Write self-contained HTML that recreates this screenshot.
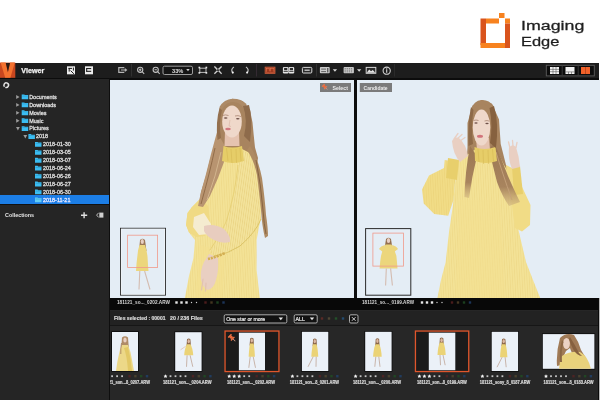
<!DOCTYPE html>
<html><head><meta charset="utf-8">
<style>
*{margin:0;padding:0;box-sizing:border-box}
html,body{width:600px;height:400px;overflow:hidden;background:#fff;font-family:"Liberation Sans",sans-serif}
.a{position:absolute}
svg.a{will-change:transform}
#brand{left:520.7px;top:17.8px;color:#1f1f1f;font-size:13.7px;line-height:16.1px;-webkit-text-stroke:0.28px #1f1f1f;will-change:transform}
#brand span{display:block;transform-origin:0 0;white-space:nowrap;transform:scaleX(1.3)}
#toolbar{left:0;top:62.5px;width:599.3px;height:15.5px;background:#1d1d1d}
#tbline{left:0;top:77.5px;width:599.3px;height:2.5px;background:#0c0c0c}
#sidebar{left:0;top:79.3px;width:108.5px;height:320.7px;background:#252525}
#sdiv{left:108.5px;top:78px;width:1.5px;height:322px;background:#0e0e0e}
.panel{top:80px;height:218px;background:#e4edf5}
#p1{left:110px;width:244px}
#pdiv{left:354px;top:79px;width:3px;height:219px;background:#0d0d0d}
#p2{left:357px;width:243px}
#info{left:110px;top:298px;width:489px;height:12px;background:#080808}
#filter{left:110px;top:310px;width:489px;height:90px;background:#262626}
#redge{left:599px;top:298px;width:1px;height:102px;background:#b5b5b5}
</style></head><body>

<!-- brand logo -->
<svg class="a" style="left:475px;top:8px" width="40" height="44" viewBox="0 0 40 44">
  <rect x="5.5" y="10.5" width="5.5" height="26.5" fill="#d9541d"/>
  <rect x="11" y="10.5" width="13" height="5" fill="#f7821f"/>
  <rect x="24" y="5" width="5.5" height="5" fill="#f7821f"/>
  <rect x="30" y="10.5" width="5" height="5" fill="#f7821f"/>
  <rect x="30" y="15.5" width="5" height="24.5" fill="#d9541d"/>
  <rect x="5.5" y="35" width="24.5" height="5" fill="#f7821f"/>
</svg>
<div id="brand" class="a"><span>Imaging</span><span style="transform:scaleX(1.2)">Edge</span></div>

<div id="toolbar" class="a"></div>
<div id="tbline" class="a"></div>
<div id="sidebar" class="a"></div>
<div id="sdiv" class="a"></div>
<div id="p1" class="a panel"></div>
<div id="pdiv" class="a"></div>
<div id="p2" class="a panel"></div>
<div id="info" class="a"></div>
<div id="filter" class="a"></div>
<div id="redge" class="a"></div>

<!--SIDEBAR-->
<div class="a" style="left:0;top:195.4px;width:108.5px;height:8.4px;background:#1c7ee6"></div>
<div class="a" style="left:0;top:203.8px;width:108.5px;height:1.2px;background:#111"></div>
<svg class="a" style="left:0;top:0" width="600" height="400" viewBox="0 0 600 400">
<circle cx="6.2" cy="85.2" r="2.3" stroke="#e4e4e4" stroke-width="1.5" fill="none" stroke-dasharray="6.2 1.0 6.2 1.0" transform="rotate(-60 6.2 85.2)"/>
<path d="M16.2 95.1 L19.5 97.0 L16.2 98.9 Z" fill="#9c9c9c"/>
<path d="M21.7 94.5 H24.299999999999997 L24.799999999999997 95.1 H28.2 V99.3 H21.7 Z" fill="#3bbdf2"/>
<rect x="22.2" y="95.8" width="5.4" height="0.5" fill="#2a93c4"/>
<text x="29.2" y="98.8" font-family="Liberation Sans" font-size="5.45" fill="#dedede" stroke="#dedede" stroke-width="0.3">Documents</text>
<path d="M16.2 103.02 L19.5 104.92 L16.2 106.82000000000001 Z" fill="#9c9c9c"/>
<path d="M21.7 102.42 H24.299999999999997 L24.799999999999997 103.02 H28.2 V107.22 H21.7 Z" fill="#3bbdf2"/>
<rect x="22.2" y="103.72" width="5.4" height="0.5" fill="#2a93c4"/>
<text x="29.2" y="106.72" font-family="Liberation Sans" font-size="5.45" fill="#dedede" stroke="#dedede" stroke-width="0.3">Downloads</text>
<path d="M16.2 110.94 L19.5 112.84 L16.2 114.74000000000001 Z" fill="#9c9c9c"/>
<path d="M21.7 110.34 H24.299999999999997 L24.799999999999997 110.94 H28.2 V115.14 H21.7 Z" fill="#3bbdf2"/>
<rect x="22.2" y="111.64" width="5.4" height="0.5" fill="#2a93c4"/>
<text x="29.2" y="114.64" font-family="Liberation Sans" font-size="5.45" fill="#dedede" stroke="#dedede" stroke-width="0.3">Movies</text>
<path d="M16.2 118.86 L19.5 120.76 L16.2 122.66000000000001 Z" fill="#9c9c9c"/>
<path d="M21.7 118.26 H24.299999999999997 L24.799999999999997 118.86 H28.2 V123.06 H21.7 Z" fill="#3bbdf2"/>
<rect x="22.2" y="119.56" width="5.4" height="0.5" fill="#2a93c4"/>
<text x="29.2" y="122.56" font-family="Liberation Sans" font-size="5.45" fill="#dedede" stroke="#dedede" stroke-width="0.3">Music</text>
<path d="M16.0 127.08000000000001 L19.8 127.08000000000001 L17.9 130.48000000000002 Z" fill="#9c9c9c"/>
<path d="M21.7 126.18 H24.299999999999997 L24.799999999999997 126.78 H28.2 V130.98000000000002 H21.7 Z" fill="#3bbdf2"/>
<rect x="22.2" y="127.48" width="5.4" height="0.5" fill="#2a93c4"/>
<text x="29.2" y="130.48000000000002" font-family="Liberation Sans" font-size="5.45" fill="#dedede" stroke="#dedede" stroke-width="0.3">Pictures</text>
<path d="M23.400000000000002 135.0 L27.200000000000003 135.0 L25.3 138.4 Z" fill="#9c9c9c"/>
<path d="M28.400000000000002 134.1 H31.0 L31.5 134.7 H34.9 V138.9 H28.400000000000002 Z" fill="#3bbdf2"/>
<rect x="28.900000000000002" y="135.4" width="5.4" height="0.5" fill="#2a93c4"/>
<text x="36" y="138.4" font-family="Liberation Sans" font-size="5.45" fill="#dedede" stroke="#dedede" stroke-width="0.3">2018</text>
<path d="M35.0 142.02 H37.6 L38.1 142.62 H41.5 V146.82000000000002 H35.0 Z" fill="#3bbdf2"/>
<rect x="35.5" y="143.32000000000002" width="5.4" height="0.5" fill="#2a93c4"/>
<text x="43" y="146.32000000000002" font-family="Liberation Sans" font-size="5.45" fill="#dedede" stroke="#dedede" stroke-width="0.3">2018-01-30</text>
<path d="M35.0 149.94 H37.6 L38.1 150.54 H41.5 V154.74 H35.0 Z" fill="#3bbdf2"/>
<rect x="35.5" y="151.24" width="5.4" height="0.5" fill="#2a93c4"/>
<text x="43" y="154.24" font-family="Liberation Sans" font-size="5.45" fill="#dedede" stroke="#dedede" stroke-width="0.3">2018-03-05</text>
<path d="M35.0 157.86 H37.6 L38.1 158.46 H41.5 V162.66000000000003 H35.0 Z" fill="#3bbdf2"/>
<rect x="35.5" y="159.16000000000003" width="5.4" height="0.5" fill="#2a93c4"/>
<text x="43" y="162.16000000000003" font-family="Liberation Sans" font-size="5.45" fill="#dedede" stroke="#dedede" stroke-width="0.3">2018-03-07</text>
<path d="M35.0 165.78 H37.6 L38.1 166.38 H41.5 V170.58 H35.0 Z" fill="#3bbdf2"/>
<rect x="35.5" y="167.08" width="5.4" height="0.5" fill="#2a93c4"/>
<text x="43" y="170.08" font-family="Liberation Sans" font-size="5.45" fill="#dedede" stroke="#dedede" stroke-width="0.3">2018-06-24</text>
<path d="M35.0 173.7 H37.6 L38.1 174.29999999999998 H41.5 V178.5 H35.0 Z" fill="#3bbdf2"/>
<rect x="35.5" y="175.0" width="5.4" height="0.5" fill="#2a93c4"/>
<text x="43" y="178.0" font-family="Liberation Sans" font-size="5.45" fill="#dedede" stroke="#dedede" stroke-width="0.3">2018-06-26</text>
<path d="M35.0 181.62 H37.6 L38.1 182.22 H41.5 V186.42000000000002 H35.0 Z" fill="#3bbdf2"/>
<rect x="35.5" y="182.92000000000002" width="5.4" height="0.5" fill="#2a93c4"/>
<text x="43" y="185.92000000000002" font-family="Liberation Sans" font-size="5.45" fill="#dedede" stroke="#dedede" stroke-width="0.3">2018-06-27</text>
<path d="M35.0 189.54 H37.6 L38.1 190.14 H41.5 V194.34 H35.0 Z" fill="#3bbdf2"/>
<rect x="35.5" y="190.84" width="5.4" height="0.5" fill="#2a93c4"/>
<text x="43" y="193.84" font-family="Liberation Sans" font-size="5.45" fill="#dedede" stroke="#dedede" stroke-width="0.3">2018-06-30</text>
<path d="M35.0 197.46 H37.6 L38.1 198.06 H41.5 V202.26000000000002 H35.0 Z" fill="#62cdf5"/>
<rect x="35.5" y="198.76000000000002" width="5.4" height="0.5" fill="#2a93c4"/>
<text x="43" y="201.76000000000002" font-family="Liberation Sans" font-size="5.45" fill="#e8e8ff" stroke="#e8e8ff" stroke-width="0.3">2018-11-21</text>
<text x="5" y="217.4" font-family="Liberation Sans" font-weight="bold" font-size="5.4" fill="#e6e6e6">Collections</text>
<path d="M81 215.2 H87.2 M84.1 212.2 V218.3" stroke="#e0e0e0" stroke-width="1.4"/>
<path d="M99.3 212.6 H103.4 V217.6 H99.3 Z" fill="#d0d0d0"/><path d="M98.6 212.8 L96.6 215.1 L98.6 217.4" stroke="#e0e0e0" stroke-width="0.8" fill="none"/>
</svg>
<!--/SIDEBAR-->
<!-- toolbar icons -->
<svg class="a" style="left:0;top:0" width="600" height="400" viewBox="0 0 600 400">
  <!-- V logo -->
  <rect x="0" y="62.6" width="15.3" height="15.2" fill="#c9471f"/>
  <path d="M0.6 62.6 L5.6 62.6 L7.9 72.5 L10.1 62.6 L14.8 62.6 L10.4 77.8 L5.2 77.8 Z" fill="#f4722f"/>
  <path d="M5.8 63 L10 63 L7.9 72 Z" fill="#2b1a14"/>
  <text x="21.3" y="73" font-family="Liberation Sans" font-weight="bold" font-size="7" fill="#f0f0f0" stroke="#f0f0f0" stroke-width="0.25" textLength="23" lengthAdjust="spacingAndGlyphs">Viewer</text>
  <!-- R icon -->
  <rect x="67" y="66.3" width="8" height="8" fill="#ececec"/>
  <path d="M68.4 68.4 H72 M73.4 67.6 V70.6 M69.2 68.4 V71.6 M70.6 70.6 L73.8 73.8" stroke="#111" stroke-width="0.95" fill="none"/>
  <!-- E icon -->
  <rect x="85" y="66.3" width="8" height="8" fill="#ececec"/>
  <path d="M86.3 68.6 H91.2 M86.3 71.3 H91.2 M86.7 68.2 V71.7" stroke="#111" stroke-width="1" fill="none"/>
  <!-- export -->
  <path d="M124.3 67.6 H118.8 V72.4 H124.3" stroke="#b5b5b5" stroke-width="1.2" fill="none"/>
  <path d="M121 70 H126.3 M124.8 68.6 L126.5 70 L124.8 71.4" stroke="#b5b5b5" stroke-width="1.1" fill="none"/>
  <line x1="131.5" y1="64" x2="131.5" y2="76.5" stroke="#303030" stroke-width="1"/>
  <!-- zoom in/out -->
  <circle cx="140.2" cy="69.8" r="2.6" stroke="#c2c2c2" stroke-width="1.1" fill="none"/>
  <path d="M142.1 71.7 L144.2 73.8 M139 69.8 H141.4 M140.2 68.6 V71" stroke="#c2c2c2" stroke-width="1.1" fill="none"/>
  <circle cx="155.7" cy="69.8" r="2.6" stroke="#c2c2c2" stroke-width="1.1" fill="none"/>
  <path d="M157.6 71.7 L159.7 73.8 M154.5 69.8 H156.9" stroke="#c2c2c2" stroke-width="1.1" fill="none"/>
  <!-- zoom dropdown -->
  <rect x="163" y="66.2" width="29.5" height="8.3" rx="1.5" stroke="#9c9c9c" stroke-width="1" fill="#141414"/>
  <text x="172" y="72.9" font-family="Liberation Sans" font-weight="bold" font-size="5.7" fill="#e0e0e0" textLength="11.3" lengthAdjust="spacingAndGlyphs">33%</text>
  <path d="M186.2 69 H189.7 L188 71.3 Z" fill="#d0d0d0"/>
  <!-- fit -->
  <rect x="199.8" y="68.2" width="6.2" height="4.2" stroke="#bcbcbc" stroke-width="1" fill="none"/>
  <rect x="198.5" y="66.7" width="1.7" height="1.7" fill="#e8e8e8"/><rect x="205.5" y="66.7" width="1.7" height="1.7" fill="#e8e8e8"/>
  <rect x="198.5" y="72" width="1.7" height="1.7" fill="#e8e8e8"/><rect x="205.5" y="72" width="1.7" height="1.7" fill="#e8e8e8"/>
  <!-- actual size -->
  <path d="M214.5 66.6 L217.8 69.3 L216.9 70.2 Z M221.5 66.6 L218.8 69.9 L217.9 69 Z M214.5 73.6 L217.2 70.3 L218.1 71.2 Z M221.5 73.6 L218.2 70.9 L219.1 70 Z" fill="#d0d0d0"/>
  <path d="M214.4 66.5 L217.2 69.3 M221.6 66.5 L218.8 69.3 M214.4 73.7 L217.2 70.9 M221.6 73.7 L218.8 70.9" stroke="#d0d0d0" stroke-width="1.3"/>
  <rect x="217.4" y="69.6" width="1.2" height="1.1" fill="#151515"/>
  <!-- rotate -->
  <path d="M233.9 67 Q230.4 69.4 232.6 72.6" stroke="#bdbdbd" stroke-width="1.2" fill="none"/>
  <circle cx="232.8" cy="72.6" r="1.05" fill="#f2f2f2"/>
  <path d="M246 67 Q249.5 69.4 247.3 72.6" stroke="#bdbdbd" stroke-width="1.2" fill="none"/>
  <circle cx="247.1" cy="72.6" r="1.05" fill="#f2f2f2"/>
  <line x1="256.5" y1="64" x2="256.5" y2="76.5" stroke="#342a32" stroke-width="1"/>
  <!-- compare orange -->
  <rect x="265.1" y="67.1" width="9.9" height="6.3" fill="#a43c20" stroke="#c85e3e" stroke-width="0.8"/>
  <rect x="266.3" y="68.4" width="3.4" height="3.6" fill="none" stroke="#e07552" stroke-width="0.6"/>
  <rect x="270.5" y="68.4" width="3.4" height="3.6" fill="none" stroke="#e07552" stroke-width="0.6"/>
  <path d="M266.5 71.4 H273.7" stroke="#7a1e10" stroke-width="0.5"/>
  <!-- double -->
  <rect x="282.9" y="66.9" width="5.6" height="6.6" rx="1.2" fill="#e6e6e6"/>
  <rect x="288.6" y="66.9" width="5.6" height="6.6" rx="1.2" fill="#e6e6e6"/>
  <rect x="284.1" y="67.9" width="3.2" height="2.3" fill="#2a2a2a"/>
  <rect x="289.8" y="67.9" width="3.2" height="2.3" fill="#2a2a2a"/>
  <path d="M283.6 71.4 H287.8 M289.3 71.4 H293.5" stroke="#1a1a1a" stroke-width="0.8"/>
  <!-- single rect -->
  <rect x="302.4" y="67.4" width="9.4" height="5.6" rx="1" stroke="#d8d8d8" stroke-width="1" fill="#2a2a2a"/>
  <path d="M304.5 70.2 H309.7" stroke="#d8d8d8" stroke-width="1.2"/>
  <line x1="316.5" y1="64" x2="316.5" y2="76.5" stroke="#303030" stroke-width="1"/>
  <!-- icon 4 -->
  <rect x="319.9" y="67.1" width="9.8" height="6.1" rx="0.8" fill="#cbcbcb"/>
  <path d="M321.2 69.1 H326 M321.2 71.6 H326" stroke="#333" stroke-width="0.7"/>
  <path d="M327.8 68 V72.4" stroke="#222" stroke-width="0.9"/>
  <path d="M332.8 69.2 H337.1 L334.95 71.8 Z" fill="#d8d8d8"/>
  <!-- icon 5 -->
  <rect x="343.6" y="67.1" width="10.3" height="6.1" rx="0.8" fill="#c8c8c8"/>
  <path d="M344.6 68.6 H352.9 M344.6 70.2 H352.9 M344.6 71.8 H352.9" stroke="#3a3a3a" stroke-width="0.5" stroke-dasharray="1.2 0.9"/>
  <path d="M357 69.2 H361.3 L359.15 71.8 Z" fill="#d8d8d8"/>
  <!-- image icon -->
  <rect x="366.2" y="67.4" width="9.6" height="5.9" stroke="#d8d8d8" stroke-width="1" fill="#2a2a2a"/>
  <path d="M366.7 72.8 L369.2 69.6 L371 71.3 L372.8 69.9 L375.3 72.8 Z" fill="#e8e8e8"/>
  <!-- info -->
  <circle cx="386.7" cy="70.7" r="3.6" stroke="#d0d0d0" stroke-width="1.1" fill="none"/>
  <path d="M386.7 69.3 V72.8" stroke="#d8d8d8" stroke-width="1.1"/>
  <circle cx="386.7" cy="68.2" r="0.55" fill="#d8d8d8"/>
  <line x1="394.5" y1="64" x2="394.5" y2="76.5" stroke="#2a2a2a" stroke-width="1"/>
  <!-- layout group -->
  <rect x="546.3" y="65.3" width="48" height="10.6" fill="#0c0c0c" stroke="#5c5c5c" stroke-width="0.9"/>
  <path d="M562.2 65.6 V75.6 M578.2 65.6 V75.6" stroke="#3d3d3d" stroke-width="0.9"/>
  <rect x="550" y="67" width="9" height="7" fill="#f2f2f2"/>
  <path d="M550 69.4 H559 M550 71.7 H559 M553 67 V74 M556 67 V74" stroke="#5a5a5a" stroke-width="0.6"/>
  <rect x="565.5" y="67" width="9" height="7" fill="#f2f2f2"/>
  <path d="M565.5 71.9 H574.5 M568.5 71.9 V74 M571.5 71.9 V74" stroke="#555" stroke-width="0.6"/>
  <rect x="581" y="67" width="9" height="7" fill="#f2622a"/>
  <path d="M585.5 67 V74" stroke="#9b3a18" stroke-width="0.6"/>
</svg>


<!--PANELS-->
<svg class="a" style="left:0;top:0" width="600" height="400" viewBox="0 0 600 400">
<defs>
<clipPath id="c1"><rect x="110" y="80" width="244" height="218"/></clipPath>
<clipPath id="c2"><rect x="357" y="80" width="243" height="218"/></clipPath>
<linearGradient id="dressL" x1="0" y1="0" x2="0" y2="1">
 <stop offset="0" stop-color="#e8c95c"/><stop offset="0.5" stop-color="#ecd06a"/><stop offset="1" stop-color="#efd67c"/>
</linearGradient>
<linearGradient id="hairG" x1="0" y1="0" x2="1" y2="0">
 <stop offset="0" stop-color="#b08a62"/><stop offset="0.5" stop-color="#8a6748"/><stop offset="1" stop-color="#a98460"/>
</linearGradient>
<linearGradient id="strandG" x1="0" y1="0" x2="0" y2="1">
 <stop offset="0" stop-color="#9a7652"/><stop offset="0.7" stop-color="#a8845e"/><stop offset="1" stop-color="#c8aa78" stop-opacity="0.5"/>
</linearGradient>
<pattern id="pleat" width="2.2" height="10" patternUnits="userSpaceOnUse" patternTransform="rotate(8)">
 <rect x="0" y="0" width="0.8" height="10" fill="#d2b04a" opacity="0.28"/>
</pattern>
<pattern id="pleat2" width="2.4" height="10" patternUnits="userSpaceOnUse" patternTransform="rotate(-3)">
 <rect x="0" y="0" width="0.8" height="10" fill="#d2b04a" opacity="0.15"/>
</pattern>
</defs>
<g clip-path="url(#c1)">
<path d="M232.5,98.7 L242.5,101 L250,110 L252.5,122.5 L253.7,135 L255,147.5 L258,158 L256,170 L250,160 L238,150 L224,150 L216,160 L210,176 L204,196 L199,204 L201,192 L206,176 L210,160 L214,147 L217.5,135 L219,115 L223.75,102.5 Z" fill="#a8845f"/>
<path d="M222,150 L214,162 L208,180 L201,198 L192,207 L187.5,213 L186,225 L189,232.5 L195,240 L193.5,258 L189,276 L184.5,300 L260,300 L256.6,270 L256.6,240 L261,216 L261,185 L257.5,165 L250,153 L240,148 Z" fill="#f3e296"/>
<path d="M222,150 L214,162 L208,180 L201,198 L192,207 L187.5,213 L186,225 L189,232.5 L195,240 L193.5,258 L189,276 L184.5,300 L260,300 L256.6,270 L256.6,240 L261,216 L261,185 L257.5,165 L250,153 L240,148 Z" fill="url(#pleat2)"/>
<path d="M200,245 L225,252 L222,300 L195,300 Z" fill="#f3e08f" opacity="0.6"/>
<path d="M201,198 L192,207 L187.5,213 L186,225 L189,232.5 L196.5,237 L205,236 L210,222 L208,206 Z" fill="#f0da84"/>
<path d="M217,132 L226,148 L224,162 L218,178 L210,196 L203,207 L198,206 L201,192 L206,174 L211,154 Z" fill="#b89470"/>
<path d="M215,148 Q210,172 201,204" stroke="#8c6845" stroke-width="0.9" fill="none"/>
<path d="M221,152 Q216,176 207,200" stroke="#d2b48e" stroke-width="1" fill="none"/>
<path d="M240,149 L252,155 L258,166 L261,185 L261,219 L252,236 L240,247 L226,255 L214,256 L209,250 L216,240 L224,228 L230,210 L236,188 L238,165 Z" fill="#f3e39c"/>
<path d="M240,149 L252,155 L258,166 L261,185 L261,219 L252,236 L240,247 L226,255 L214,256 L209,250 L216,240 L224,228 L230,210 L236,188 L238,165 Z" fill="url(#pleat)"/>
<path d="M261,219 Q256,232 240,246 Q228,254 214,256" stroke="#dcc466" stroke-width="1" fill="none"/>
<path d="M238,165 Q235,195 226,222 Q220,236 210,250" stroke="#e4cd70" stroke-width="0.8" fill="none"/>
<path d="M250,146 Q258,158 262,178 Q265,200 266,215 Q268,228 268,236 L265,238 Q262,226 261,210 Q259,190 257,175 Q254,160 247,150 Z" fill="#ae8a62"/>
<path d="M256,160 Q261,185 263,210 Q264,225 266,234" stroke="#7c5a3a" stroke-width="0.8" fill="none"/>
<path d="M194,217 L204,213 L211,224 L209,234 L199,235 L193,227 Z" fill="#f5ecd0"/>
<path d="M204,226 Q214,223 224,229 Q231,236 230,242 Q222,244 214,240 Q206,236 204,231 Z" fill="#e8cdbf"/>
<path d="M209,254 Q214,256 218,258 Q219,270 216,280 Q214,288 208,290 Q203,288 201,280 Q200,270 204,262 Z" fill="#e9cfc2"/>
<path d="M203,279 L201.5,290 M206,283 L205.5,291" stroke="#e2c2b2" stroke-width="1.2" stroke-linecap="round"/>
<path d="M208,259 Q216,257 225,253" stroke="#d4ae52" stroke-width="2.6" stroke-dasharray="2.2 0.9" fill="none"/>
<path d="M225,132 L239,132 L239.5,146 L224.5,146 Z" fill="#e5c3b0"/>
<path d="M223.5,146 Q232,149 242,146 L244,161 Q233,165 222,161 Z" fill="#e6cd68"/>
<path d="M226.5,148 L228,161 M231,149 L232,163 M236,149 L236.5,163 M240,148 L241,161" stroke="#d2b450" stroke-width="0.5"/>
<ellipse cx="232" cy="121.5" rx="9.8" ry="16" fill="#efd8ca"/>
<path d="M220,116 Q222,103 232.5,102 Q243,102 245,114 L246.5,104 Q241,98.5 232.5,98.7 Q224,99 219.5,107 Z" fill="#ad8a66"/>
<path d="M243,106 Q248,120 244,136 L250,142 Q253,118 249,105 Z" fill="#8e6b4b"/>
<path d="M222,110 Q218.5,124 221,138 L217.5,140 Q215.5,122 219.5,108 Z" fill="#94704e"/>
<path d="M222.5,115.5 Q225.5,114.3 228.5,115.5 M235,116 Q238,115 241,116.5" stroke="#a07a66" stroke-width="0.7" fill="none"/>
<ellipse cx="225.7" cy="118" rx="1.8" ry="0.75" fill="#6e5048"/><ellipse cx="237.8" cy="118.8" rx="1.8" ry="0.75" fill="#6e5048"/>
<path d="M230,120 L229,126 L231,126.5" stroke="#d8b4a2" stroke-width="0.6" fill="none"/>
<ellipse cx="228" cy="129" rx="2.8" ry="1.2" fill="#d27a80"/>
</g>
<rect x="120.5" y="228.3" width="45" height="66.8" fill="none" stroke="#2a2a2a" stroke-width="1"/>
<rect x="121.2" y="229" width="43.6" height="65.4" fill="none" stroke="#f6f8fa" stroke-width="0.6"/>
<path d="M140,240 Q142.5,237.5 145,240 L146.5,251 L139,251 Z" fill="#9c7858"/>
<ellipse cx="142.3" cy="241.6" rx="1.6" ry="2.5" fill="#e8cfc2"/>
<path d="M139.5,245 L145,245 Q147.5,252 147.7,260 Q148,266 148.5,271 L136,271 Q136.5,262 137.5,255 Q138,249 139.5,245 Z" fill="#ecd67c"/>
<path d="M139.8,271 L139,289.5 M144.6,271 L150,289.5" stroke="#d4bcb0" stroke-width="1.1"/>
<rect x="127.6" y="235.2" width="30" height="32.2" fill="none" stroke="#f0998a" stroke-width="0.8"/>
<g clip-path="url(#c2)">
<path d="M481.5,100 L492,103.7 L499,119.5 L500.7,144 L506,165 L516.5,186 L520,200 L512,204 L500,190 L490,165 L476,165 L469,185 L467.5,197 L463,194 L465.7,175.5 L467.5,147.5 L467.5,123 L472.7,105.5 Z" fill="#a8845f"/>
<path d="M476,149 L496,149 L504,165 L513,180 L513,190 L518,228 L526,262 L533,280 L541,300 L437,300 L441,280 L445.6,262.5 L449,232 L453,205 L457,161.5 Z" fill="#f3e296"/>
<path d="M476,149 L496,149 L504,165 L513,180 L513,190 L518,228 L526,262 L533,280 L541,300 L437,300 L441,280 L445.6,262.5 L449,232 L453,205 L457,161.5 Z" fill="url(#pleat2)"/>
<path d="M460,200 L500,200 L505,300 L455,300 Z" fill="#f3e08f" opacity="0.5"/>
<path d="M444.7,160 L457,162 L455,182 L453.5,200 L448.2,215.7 L434.2,214 L423.7,203.5 L422,189.5 L429,175.5 L444,168 Z" fill="#f1dc86"/>
<path d="M444.7,160 L457,162 L455,182 L453.5,200 L448.2,215.7 L434.2,214 L423.7,203.5 L422,189.5 L429,175.5 L444,168 Z" fill="url(#pleat2)"/>
<path d="M506,165 L513,168.5 L523.5,190 L530.5,205 L530,225 L522,231.5 L515,228 L512,205 L507,180 Z" fill="#f1dc86"/>
<path d="M448,158 L459,160 L457,180 L446,178 Z" fill="#e8cf6c"/>
<path d="M512,167 L520,166 L523,194 L514,195 Z" fill="#e8cf6c"/>
<path d="M470,146 Q465,172 464.5,197 L469,198 Q472,176 477,156 Z" fill="url(#strandG)"/>
<path d="M494,142 Q502,160 508,176 Q515,192 520,202 L509,206 Q502,196 497,182 Q494,170 489,150 Z" fill="url(#strandG)"/>
<path d="M496,152 Q502,172 512,200" stroke="#c4a07a" stroke-width="0.9" fill="none"/>
<path d="M452,141 Q455,136 459,138 Q466,144 468,156 L460,162 Q453,154 452,141 Z" fill="#e9cfc2"/>
<path d="M454,139 L458,133.5 M457,139 L462,134.5 M460,141 L465,137.5" stroke="#e9cfc2" stroke-width="1.3" stroke-linecap="round"/>
<path d="M509,148 Q512,143 516,147 Q519,156 520,167 L512,169 Q508,160 509,148 Z" fill="#e9cfc2"/>
<path d="M510,148 L508.5,142 M513,146 L512.5,140.5 M516,147.5 L517,142.5" stroke="#e9cfc2" stroke-width="1.3" stroke-linecap="round"/>
<path d="M476,138 L489,138 L490,150 L477,150 Z" fill="#e5c3b0"/>
<path d="M474.5,147 Q484,151 495.5,147 L497,161 Q486,165 475,161 Z" fill="#e6cd68"/>
<path d="M478,149 L479,162 M483,150 L483.5,164 M488,150 L488.5,164 M492.5,149 L493.5,162" stroke="#d2b450" stroke-width="0.5"/>
<ellipse cx="481.5" cy="127.5" rx="8.8" ry="18" fill="#efd8ca"/>
<path d="M472.5,120 Q474,104.5 482,104 Q490.5,104.5 491.5,118 L493.5,106 Q489,99.5 481.5,100 Q474,100.5 470.5,110 Z" fill="#a8845f"/>
<path d="M489.5,108 Q493,125 490,143 L496,148 Q499,122 494,106 Z" fill="#86613f"/>
<path d="M473.5,110 Q471,126 473,144 L468.5,146 Q467.5,124 471,107 Z" fill="#8e6a48"/>
<path d="M473.5,120.5 Q476,119.5 478.5,120.5 M484.5,121 Q487,120 489.5,121.2" stroke="#a07a66" stroke-width="0.7" fill="none"/>
<ellipse cx="476" cy="123" rx="1.7" ry="0.75" fill="#6e5048"/><ellipse cx="487" cy="123.5" rx="1.7" ry="0.75" fill="#6e5048"/>
<ellipse cx="480" cy="136.3" rx="3" ry="1.5" fill="#d2737a"/>
</g>
<rect x="365.6" y="228.6" width="45.2" height="66.6" fill="none" stroke="#2a2a2a" stroke-width="1"/>
<path d="M386,239 Q388.5,236.5 391,239 L393,252 L384,252 Z" fill="#94704f"/>
<ellipse cx="388.5" cy="240.5" rx="1.7" ry="2.6" fill="#e8cfc2"/>
<path d="M385.5,244.5 L391.5,244.5 Q395,250 396.4,256 Q397,262 397.5,268.4 L379.6,268.4 Q380,262 381,256 Q382.5,249 385.5,244.5 Z" fill="#ecd67c"/>
<path d="M379,249 Q380.5,246 385,245 L383,252 Z M398,249 Q396.5,246 392,245 L394,252 Z" fill="#ecd67c"/>
<path d="M386.3,268.4 L385.6,285.5 M390.6,268.4 L392.4,285.5" stroke="#d4bcb0" stroke-width="1.1"/>
<rect x="372.9" y="233.1" width="30.6" height="33" fill="none" stroke="#f0998a" stroke-width="0.8"/>
<rect x="320" y="83" width="31" height="9" fill="#7b7b7b"/>
<g transform="translate(325.2,87.3) rotate(-45) scale(0.8)"><rect x="-2.3" y="-4" width="4.6" height="1.3" fill="#f47748"/><rect x="-1.4" y="-2.9" width="2.8" height="3" fill="#ef6a3c"/><rect x="-2.5" y="0" width="5" height="1.3" fill="#f47748"/><rect x="-0.35" y="1.2" width="0.7" height="3" fill="#e09a86"/></g>
<text x="332.5" y="89.9" font-family="Liberation Sans" font-weight="bold" font-size="5.4" fill="#ececec" textLength="15.4" lengthAdjust="spacingAndGlyphs">Select</text>
<rect x="359.8" y="83" width="32.2" height="9" fill="#7b7b7b"/>
<text x="363.6" y="89.9" font-family="Liberation Sans" font-weight="bold" font-size="5.2" fill="#ececec" textLength="24" lengthAdjust="spacingAndGlyphs">Candidate</text>
<text x="117" y="304.2" font-family="Liberation Sans" font-weight="bold" font-size="5.2" fill="#d6d6d6" textLength="53" lengthAdjust="spacingAndGlyphs">181121_so..._0202.ARW</text>
<rect x="175.3" y="301.3" width="2.4" height="2.4" fill="#e8e8e8"/>
<rect x="180.3" y="301.3" width="2.4" height="2.4" fill="#e8e8e8"/>
<rect x="185.3" y="301.3" width="2.4" height="2.4" fill="#e8e8e8"/>
<circle cx="191.5" cy="302.5" r="0.7" fill="#cfcfcf"/>
<circle cx="196.5" cy="302.5" r="0.7" fill="#cfcfcf"/>
<rect x="204.3" y="301.3" width="2.4" height="2.4" fill="#4a1c1c"/>
<rect x="210.3" y="301.3" width="2.4" height="2.4" fill="#443620"/>
<rect x="216.3" y="301.3" width="2.4" height="2.4" fill="#1c3f1e"/>
<rect x="222.3" y="301.3" width="2.4" height="2.4" fill="#1c3458"/>
<text x="362" y="304.2" font-family="Liberation Sans" font-weight="bold" font-size="5.2" fill="#d6d6d6" textLength="52" lengthAdjust="spacingAndGlyphs">181121_so..._0199.ARW</text>
<rect x="420.8" y="301.3" width="2.4" height="2.4" fill="#e8e8e8"/>
<rect x="425.8" y="301.3" width="2.4" height="2.4" fill="#e8e8e8"/>
<rect x="430.8" y="301.3" width="2.4" height="2.4" fill="#e8e8e8"/>
<circle cx="437" cy="302.5" r="0.7" fill="#cfcfcf"/>
<circle cx="442" cy="302.5" r="0.7" fill="#cfcfcf"/>
<rect x="450.8" y="301.3" width="2.4" height="2.4" fill="#4a1c1c"/>
<rect x="456.8" y="301.3" width="2.4" height="2.4" fill="#443620"/>
<rect x="462.8" y="301.3" width="2.4" height="2.4" fill="#1c3f1e"/>
<rect x="468.8" y="301.3" width="2.4" height="2.4" fill="#1c3458"/>
</svg>
<!--/PANELS-->
<!--FILM-->
<div class="a" style="left:110px;top:310.5px;width:489px;height:14.3px;background:#222"></div>
<div class="a" style="left:110px;top:324.8px;width:489px;height:1.2px;background:#161616"></div>
<div class="a" style="left:110px;top:326px;width:489px;height:74px;background:#272727"></div>
<svg class="a" style="left:0;top:0" width="600" height="400" viewBox="0 0 600 400">
<text x="114" y="320.3" font-family="Liberation Sans" font-weight="bold" font-size="5.4" fill="#d8d8d8" text-anchor="start" textLength="51.5" lengthAdjust="spacingAndGlyphs" stroke="#d8d8d8" stroke-width="0.2">Files selected : 00001</text>
<text x="170" y="320.3" font-family="Liberation Sans" font-weight="bold" font-size="5.4" fill="#d8d8d8" text-anchor="start" textLength="32.8" lengthAdjust="spacingAndGlyphs" stroke="#d8d8d8" stroke-width="0.2">20 / 236 Files</text>
<rect x="224.2" y="314.8" width="62.6" height="8.2" rx="1.3" fill="#111" stroke="#bdbdbd" stroke-width="0.9"/>
<text x="226.2" y="320.8" font-family="Liberation Sans" font-weight="normal" font-size="5.2" fill="#ececec" text-anchor="start" textLength="39" lengthAdjust="spacingAndGlyphs" stroke="#ececec" stroke-width="0.2">One star or more</text>
<path d="M278.6,317.5 H283 L280.8,320.3 Z" fill="#e6e6e6"/>
<rect x="294.2" y="314.8" width="23" height="8.2" rx="1.3" fill="#111" stroke="#bdbdbd" stroke-width="0.9"/>
<text x="295.5" y="320.8" font-family="Liberation Sans" font-weight="normal" font-size="5.2" fill="#ececec" text-anchor="start" textLength="9.3" lengthAdjust="spacingAndGlyphs" stroke="#ececec" stroke-width="0.2">ALL</text>
<path d="M309.8,317.5 H314.2 L312,320.3 Z" fill="#e6e6e6"/>
<rect x="320.8" y="317.3" width="2.4" height="2.4" fill="#5a2a26"/>
<rect x="327.8" y="317.3" width="2.4" height="2.4" fill="#4f4634"/>
<rect x="334.8" y="317.3" width="2.4" height="2.4" fill="#23512a"/>
<rect x="341.8" y="317.3" width="2.4" height="2.4" fill="#234a6e"/>
<rect x="349.5" y="314.8" width="8.5" height="8.2" rx="1.3" fill="#111" stroke="#bdbdbd" stroke-width="0.9"/>
<path d="M351.9,317.1 L355.6,320.8 M355.6,317.1 L351.9,320.8" stroke="#e6e6e6" stroke-width="0.9"/>
<defs>
<clipPath id="th0"><rect x="112" y="332" width="26" height="39"/></clipPath>
<clipPath id="th1"><rect x="175.2" y="332.2" width="26.400000000000006" height="38.80000000000001"/></clipPath>
<clipPath id="th2"><rect x="238.9" y="332.7" width="26.099999999999994" height="37.5"/></clipPath>
<clipPath id="th3"><rect x="301.9" y="331.8" width="26.400000000000034" height="39.19999999999999"/></clipPath>
<clipPath id="th4"><rect x="365.2" y="331.8" width="26.400000000000034" height="39.19999999999999"/></clipPath>
<clipPath id="th5"><rect x="428.8" y="332.7" width="26.5" height="37.5"/></clipPath>
<clipPath id="th6"><rect x="491.7" y="331.8" width="26.400000000000034" height="39.19999999999999"/></clipPath>
<clipPath id="th7"><rect x="542.8" y="334.1" width="51.60000000000002" height="34.69999999999999"/></clipPath>
<clipPath id="filmclip"><rect x="110" y="326" width="486" height="74"/></clipPath>
</defs>
<g clip-path="url(#filmclip)">
<rect x="111.2" y="331.2" width="27.6" height="40.6" fill="#0d0d0d"/>
<rect x="112" y="332" width="26" height="39" fill="#ebf1f8"/>
<g clip-path="url(#th0)">
<path d="M122,337.5 Q125,335 128,337.5 L129,350 L121,350 Z" fill="#b08c68"/>
<ellipse cx="125" cy="340" rx="1.7" ry="2.6" fill="#ead0c2"/>
<path d="M122,345 L128,345 Q131,352 132,360 Q133,366 134,371 L116,371 Q117,362 119,354 Q120,348 122,345 Z" fill="#ecd888"/>
<path d="M124,348 Q127,356 128,371 L132,371 Q131,358 128,347 Z" fill="#e2c866"/>
<path d="M121.5,343 Q120.5,349 120.8,354" stroke="#a98462" stroke-width="0.9" fill="none"/>
</g>
<rect x="101.19999999999999" y="375.3" width="1.8" height="1.8" fill="#c4c4c4"/>
<rect x="106.19999999999999" y="375.3" width="1.8" height="1.8" fill="#c4c4c4"/>
<rect x="111.19999999999999" y="375.3" width="1.8" height="1.8" fill="#c4c4c4"/>
<rect x="116.19999999999999" y="375.3" width="1.8" height="1.8" fill="#c4c4c4"/>
<rect x="121.19999999999999" y="375.3" width="1.8" height="1.8" fill="#c4c4c4"/>
<rect x="128.4" y="375.0" width="2.4" height="2.4" fill="#4c2424"/>
<rect x="134.20000000000002" y="375.0" width="2.4" height="2.4" fill="#48402e"/>
<rect x="140.0" y="375.0" width="2.4" height="2.4" fill="#214624"/>
<rect x="145.8" y="375.0" width="2.4" height="2.4" fill="#213c5e"/>
<text x="125" y="384" font-family="Liberation Sans" font-weight="bold" font-size="5.1" fill="#dcdcdc" text-anchor="middle" textLength="50" lengthAdjust="spacingAndGlyphs" stroke="#dcdcdc" stroke-width="0.2">181121_son...8_0207.ARW</text>
<rect x="174.39999999999998" y="331.4" width="28.000000000000007" height="40.40000000000001" fill="#0d0d0d"/>
<rect x="175.2" y="332.2" width="26.400000000000006" height="38.80000000000001" fill="#ebf1f8"/>
<g clip-path="url(#th1)">
<path d="M187.0,339.2 Q188.7,337.59999999999997 190.39999999999998,339.2 L190.89999999999998,346.2 L186.5,346.2 Z" fill="#8a6648"/>
<ellipse cx="188.7" cy="341.2" rx="1.2" ry="2" fill="#dcb8a2"/>
<path d="M186.89999999999998,344.3 L190.5,344.3 Q192.73749999999998,348.3 193.23749999999998,355.3 L184.1625,355.3 Q184.6625,348.3 186.89999999999998,344.3 Z" fill="#ebd376"/>
<path d="M187.1,355.3 L186.5,366.8 M190.1,355.3 L192.8,366.8" stroke="#bfa596" stroke-width="0.8"/>
<path d="M185.7,346.3 L180.5,349.8" stroke="#e0c2ae" stroke-width="0.8"/>
</g>
<path d="M165.5,374.3 L166.15,375.59999999999997 L167.4,375.7 L166.5,376.65 L166.75,378.0 L165.5,377.3 L164.25,378.0 L164.5,376.65 L163.6,375.7 L164.85,375.59999999999997 Z" fill="#f4f4f4"/>
<rect x="169.6" y="375.3" width="1.8" height="1.8" fill="#c4c4c4"/>
<rect x="174.6" y="375.3" width="1.8" height="1.8" fill="#c4c4c4"/>
<rect x="179.6" y="375.3" width="1.8" height="1.8" fill="#c4c4c4"/>
<rect x="184.6" y="375.3" width="1.8" height="1.8" fill="#c4c4c4"/>
<rect x="191.8" y="375.0" width="2.4" height="2.4" fill="#4c2424"/>
<rect x="197.60000000000002" y="375.0" width="2.4" height="2.4" fill="#48402e"/>
<rect x="203.4" y="375.0" width="2.4" height="2.4" fill="#214624"/>
<rect x="209.20000000000002" y="375.0" width="2.4" height="2.4" fill="#213c5e"/>
<text x="187.25" y="384" font-family="Liberation Sans" font-weight="bold" font-size="5.1" fill="#dcdcdc" text-anchor="middle" textLength="48.5" lengthAdjust="spacingAndGlyphs" stroke="#dcdcdc" stroke-width="0.2">181121_son..._0204.ARW</text>
<rect x="225.05" y="331.04999999999995" width="53.90000000000002" height="40.500000000000014" fill="#1b1b1b" stroke="#e0562c" stroke-width="1.3"/>
<rect x="238.9" y="332.7" width="26.099999999999994" height="37.5" fill="#ebf1f8"/>
<g clip-path="url(#th2)">
<path d="M250.10000000000002,338.6 Q251.8,337.0 253.5,338.6 L254.0,345.6 L249.60000000000002,345.6 Z" fill="#8a6648"/>
<ellipse cx="251.8" cy="340.6" rx="1.2" ry="2" fill="#dcb8a2"/>
<path d="M250.0,343.5 L253.60000000000002,343.5 Q254.435,347.5 254.935,356.7 L248.66500000000002,356.7 Q249.16500000000002,347.5 250.0,343.5 Z" fill="#ebd376"/>
<path d="M250.20000000000002,356.7 L248.8,367.8 M253.20000000000002,356.7 L255.5,367.8" stroke="#bfa596" stroke-width="0.8"/>
</g>
<g transform="translate(232.2,338.2) rotate(-45)"><rect x="-2.3" y="-4" width="4.6" height="1.3" fill="#f47748"/><rect x="-1.4" y="-2.9" width="2.8" height="3" fill="#ef6a3c"/><rect x="-2.5" y="0" width="5" height="1.3" fill="#f47748"/><rect x="-0.35" y="1.2" width="0.7" height="3.2" fill="#e6a48c"/></g>
<path d="M229.2,374.3 L229.85,375.59999999999997 L231.1,375.7 L230.2,376.65 L230.45,378.0 L229.2,377.3 L227.95,378.0 L228.2,376.65 L227.29999999999998,375.7 L228.54999999999998,375.59999999999997 Z" fill="#f4f4f4"/>
<path d="M234.2,374.3 L234.85,375.59999999999997 L236.1,375.7 L235.2,376.65 L235.45,378.0 L234.2,377.3 L232.95,378.0 L233.2,376.65 L232.29999999999998,375.7 L233.54999999999998,375.59999999999997 Z" fill="#f4f4f4"/>
<path d="M239.2,374.3 L239.85,375.59999999999997 L241.1,375.7 L240.2,376.65 L240.45,378.0 L239.2,377.3 L237.95,378.0 L238.2,376.65 L237.29999999999998,375.7 L238.54999999999998,375.59999999999997 Z" fill="#f4f4f4"/>
<rect x="243.29999999999998" y="375.3" width="1.8" height="1.8" fill="#c4c4c4"/>
<rect x="248.29999999999998" y="375.3" width="1.8" height="1.8" fill="#c4c4c4"/>
<rect x="255.5" y="375.0" width="2.4" height="2.4" fill="#4c2424"/>
<rect x="261.3" y="375.0" width="2.4" height="2.4" fill="#48402e"/>
<rect x="267.1" y="375.0" width="2.4" height="2.4" fill="#214624"/>
<rect x="272.9" y="375.0" width="2.4" height="2.4" fill="#213c5e"/>
<text x="251" y="384" font-family="Liberation Sans" font-weight="bold" font-size="5.1" fill="#dcdcdc" text-anchor="middle" textLength="48" lengthAdjust="spacingAndGlyphs" stroke="#dcdcdc" stroke-width="0.2">181121_son..._0202.ARW</text>
<rect x="301.09999999999997" y="331.0" width="28.000000000000036" height="40.79999999999999" fill="#0d0d0d"/>
<rect x="301.9" y="331.8" width="26.400000000000034" height="39.19999999999999" fill="#ebf1f8"/>
<g clip-path="url(#th3)">
<path d="M313.1,339.3 Q314.8,337.7 316.5,339.3 L317.0,346.3 L312.6,346.3 Z" fill="#8a6648"/>
<ellipse cx="314.8" cy="341.3" rx="1.2" ry="2" fill="#dcb8a2"/>
<path d="M313.0,344.2 L316.6,344.2 Q317.77500000000003,348.2 318.27500000000003,356.7 L311.325,356.7 Q311.825,348.2 313.0,344.2 Z" fill="#ebd376"/>
<path d="M313.2,356.7 L308,366.8 M316.2,356.7 L316,366.8" stroke="#bfa596" stroke-width="0.8"/>
</g>
<path d="M292.4,374.3 L293.04999999999995,375.59999999999997 L294.29999999999995,375.7 L293.4,376.65 L293.65,378.0 L292.4,377.3 L291.15,378.0 L291.4,376.65 L290.5,375.7 L291.75,375.59999999999997 Z" fill="#f4f4f4"/>
<rect x="296.5" y="375.3" width="1.8" height="1.8" fill="#c4c4c4"/>
<rect x="301.5" y="375.3" width="1.8" height="1.8" fill="#c4c4c4"/>
<rect x="306.5" y="375.3" width="1.8" height="1.8" fill="#c4c4c4"/>
<rect x="311.5" y="375.3" width="1.8" height="1.8" fill="#c4c4c4"/>
<rect x="318.7" y="375.0" width="2.4" height="2.4" fill="#4c2424"/>
<rect x="324.5" y="375.0" width="2.4" height="2.4" fill="#48402e"/>
<rect x="330.3" y="375.0" width="2.4" height="2.4" fill="#214624"/>
<rect x="336.09999999999997" y="375.0" width="2.4" height="2.4" fill="#213c5e"/>
<text x="314.4" y="384" font-family="Liberation Sans" font-weight="bold" font-size="5.1" fill="#dcdcdc" text-anchor="middle" textLength="49.2" lengthAdjust="spacingAndGlyphs" stroke="#dcdcdc" stroke-width="0.2">181121_son...8_0201.ARW</text>
<rect x="364.4" y="331.0" width="28.000000000000036" height="40.79999999999999" fill="#0d0d0d"/>
<rect x="365.2" y="331.8" width="26.400000000000034" height="39.19999999999999" fill="#ebf1f8"/>
<g clip-path="url(#th4)">
<path d="M375.7,339 Q377.4,337.4 379.09999999999997,339 L379.59999999999997,346 L375.2,346 Z" fill="#8a6648"/>
<ellipse cx="377.4" cy="341" rx="1.2" ry="2" fill="#dcb8a2"/>
<path d="M375.59999999999997,344.2 L379.2,344.2 Q381.22499999999997,348.2 381.72499999999997,356.7 L373.075,356.7 Q373.575,348.2 375.59999999999997,344.2 Z" fill="#ebd376"/>
<path d="M375.79999999999995,356.7 L374.8,366.8 M378.79999999999995,356.7 L380,366.8" stroke="#bfa596" stroke-width="0.8"/>
</g>
<path d="M355.6,374.3 L356.25,375.59999999999997 L357.5,375.7 L356.6,376.65 L356.85,378.0 L355.6,377.3 L354.35,378.0 L354.6,376.65 L353.70000000000005,375.7 L354.95000000000005,375.59999999999997 Z" fill="#f4f4f4"/>
<rect x="359.70000000000005" y="375.3" width="1.8" height="1.8" fill="#c4c4c4"/>
<rect x="364.70000000000005" y="375.3" width="1.8" height="1.8" fill="#c4c4c4"/>
<rect x="369.70000000000005" y="375.3" width="1.8" height="1.8" fill="#c4c4c4"/>
<rect x="374.70000000000005" y="375.3" width="1.8" height="1.8" fill="#c4c4c4"/>
<rect x="381.90000000000003" y="375.0" width="2.4" height="2.4" fill="#4c2424"/>
<rect x="387.70000000000005" y="375.0" width="2.4" height="2.4" fill="#48402e"/>
<rect x="393.50000000000006" y="375.0" width="2.4" height="2.4" fill="#214624"/>
<rect x="399.3" y="375.0" width="2.4" height="2.4" fill="#213c5e"/>
<text x="377" y="384" font-family="Liberation Sans" font-weight="bold" font-size="5.1" fill="#dcdcdc" text-anchor="middle" textLength="48" lengthAdjust="spacingAndGlyphs" stroke="#dcdcdc" stroke-width="0.2">181121_son..._0200.ARW</text>
<rect x="415.45" y="331.04999999999995" width="53.29999999999997" height="40.500000000000014" fill="#1b1b1b" stroke="#e0562c" stroke-width="1.3"/>
<rect x="428.8" y="332.7" width="26.5" height="37.5" fill="#ebf1f8"/>
<g clip-path="url(#th5)">
<path d="M439.90000000000003,338.2 Q441.6,336.59999999999997 443.3,338.2 L443.8,345.2 L439.40000000000003,345.2 Z" fill="#8a6648"/>
<ellipse cx="441.6" cy="340.2" rx="1.2" ry="2" fill="#dcb8a2"/>
<path d="M439.8,342.5 L443.40000000000003,342.5 Q445.21250000000003,346.5 445.71250000000003,355 L437.4875,355 Q437.9875,346.5 439.8,342.5 Z" fill="#ebd376"/>
<path d="M440.0,355 L440.5,365.2 M443.0,355 L445.2,365.2" stroke="#bfa596" stroke-width="0.8"/>
</g>
<path d="M419.4,374.3 L420.04999999999995,375.59999999999997 L421.29999999999995,375.7 L420.4,376.65 L420.65,378.0 L419.4,377.3 L418.15,378.0 L418.4,376.65 L417.5,375.7 L418.75,375.59999999999997 Z" fill="#f4f4f4"/>
<path d="M424.4,374.3 L425.04999999999995,375.59999999999997 L426.29999999999995,375.7 L425.4,376.65 L425.65,378.0 L424.4,377.3 L423.15,378.0 L423.4,376.65 L422.5,375.7 L423.75,375.59999999999997 Z" fill="#f4f4f4"/>
<path d="M429.4,374.3 L430.04999999999995,375.59999999999997 L431.29999999999995,375.7 L430.4,376.65 L430.65,378.0 L429.4,377.3 L428.15,378.0 L428.4,376.65 L427.5,375.7 L428.75,375.59999999999997 Z" fill="#f4f4f4"/>
<rect x="433.5" y="375.3" width="1.8" height="1.8" fill="#c4c4c4"/>
<rect x="438.5" y="375.3" width="1.8" height="1.8" fill="#c4c4c4"/>
<rect x="445.7" y="375.0" width="2.4" height="2.4" fill="#4c2424"/>
<rect x="451.5" y="375.0" width="2.4" height="2.4" fill="#48402e"/>
<rect x="457.3" y="375.0" width="2.4" height="2.4" fill="#214624"/>
<rect x="463.09999999999997" y="375.0" width="2.4" height="2.4" fill="#213c5e"/>
<text x="441.9" y="384" font-family="Liberation Sans" font-weight="bold" font-size="5.1" fill="#dcdcdc" text-anchor="middle" textLength="49.8" lengthAdjust="spacingAndGlyphs" stroke="#dcdcdc" stroke-width="0.2">181121_son...8_0199.ARW</text>
<rect x="490.9" y="331.0" width="28.000000000000036" height="40.79999999999999" fill="#0d0d0d"/>
<rect x="491.7" y="331.8" width="26.400000000000034" height="39.19999999999999" fill="#ebf1f8"/>
<g clip-path="url(#th6)">
<path d="M502.0,339.2 Q503.7,337.59999999999997 505.4,339.2 L505.9,346.2 L501.5,346.2 Z" fill="#8a6648"/>
<ellipse cx="503.7" cy="341.2" rx="1.2" ry="2" fill="#dcb8a2"/>
<path d="M501.9,344.2 L505.5,344.2 Q506.8875,348.2 507.3875,357.2 L500.0125,357.2 Q500.5125,348.2 501.9,344.2 Z" fill="#ebd376"/>
<path d="M502.09999999999997,357.2 L497,367.2 M505.09999999999997,357.2 L506.2,367.2" stroke="#bfa596" stroke-width="0.8"/>
</g>
<path d="M482.4,374.3 L483.04999999999995,375.59999999999997 L484.29999999999995,375.7 L483.4,376.65 L483.65,378.0 L482.4,377.3 L481.15,378.0 L481.4,376.65 L480.5,375.7 L481.75,375.59999999999997 Z" fill="#f4f4f4"/>
<rect x="486.5" y="375.3" width="1.8" height="1.8" fill="#c4c4c4"/>
<rect x="491.5" y="375.3" width="1.8" height="1.8" fill="#c4c4c4"/>
<rect x="496.5" y="375.3" width="1.8" height="1.8" fill="#c4c4c4"/>
<rect x="501.5" y="375.3" width="1.8" height="1.8" fill="#c4c4c4"/>
<rect x="508.7" y="375.0" width="2.4" height="2.4" fill="#4c2424"/>
<rect x="514.4999999999999" y="375.0" width="2.4" height="2.4" fill="#48402e"/>
<rect x="520.3" y="375.0" width="2.4" height="2.4" fill="#214624"/>
<rect x="526.0999999999999" y="375.0" width="2.4" height="2.4" fill="#213c5e"/>
<text x="505" y="384" font-family="Liberation Sans" font-weight="bold" font-size="5.1" fill="#dcdcdc" text-anchor="middle" textLength="50.4" lengthAdjust="spacingAndGlyphs" stroke="#dcdcdc" stroke-width="0.2">181121_sony_8_0187.ARW</text>
<rect x="542.0" y="333.3" width="53.200000000000024" height="36.29999999999999" fill="#0d0d0d"/>
<rect x="542.8" y="334.1" width="51.60000000000002" height="34.69999999999999" fill="#ebf1f8"/>
<g clip-path="url(#th7)">
<path d="M560,338 Q566,332 574,335 Q579,342 581,350 Q584,355 586,358 L576,360 Q571,352 570,348 L566,351 Q562,358 561,365 L557,366 Q556,352 560,338 Z" fill="#a07a56"/>
<path d="M562,356 Q570,351 580,352 Q588,356 591,369 L559,369 Q559,362 562,356 Z" fill="#e9d27c"/>
<ellipse cx="566.5" cy="343.5" rx="3.4" ry="5.6" fill="#ebd2c4"/>
<path d="M570,337 Q575,345 579,353 L582,356 Q577,356 573,349 Q570,343 569,339 Z" fill="#86603f"/>
<path d="M562,340 Q559,350 560,362 L562,362 Q561,350 563.5,342 Z" fill="#8a6644"/>
</g>
<path d="M546,374.3 L546.65,375.59999999999997 L547.9,375.7 L547,376.65 L547.25,378.0 L546,377.3 L544.75,378.0 L545,376.65 L544.1,375.7 L545.35,375.59999999999997 Z" fill="#f4f4f4"/>
<rect x="550.1" y="375.3" width="1.8" height="1.8" fill="#c4c4c4"/>
<rect x="555.1" y="375.3" width="1.8" height="1.8" fill="#c4c4c4"/>
<rect x="560.1" y="375.3" width="1.8" height="1.8" fill="#c4c4c4"/>
<rect x="565.1" y="375.3" width="1.8" height="1.8" fill="#c4c4c4"/>
<rect x="572.3" y="375.0" width="2.4" height="2.4" fill="#4c2424"/>
<rect x="578.0999999999999" y="375.0" width="2.4" height="2.4" fill="#48402e"/>
<rect x="583.9" y="375.0" width="2.4" height="2.4" fill="#214624"/>
<rect x="589.6999999999999" y="375.0" width="2.4" height="2.4" fill="#213c5e"/>
<text x="568.6" y="384" font-family="Liberation Sans" font-weight="bold" font-size="5.1" fill="#dcdcdc" text-anchor="middle" textLength="50" lengthAdjust="spacingAndGlyphs" stroke="#dcdcdc" stroke-width="0.2">181121_son...8_0183.ARW</text>
</g>
</svg>
<div class="a" style="left:598px;top:298px;width:1px;height:102px;background:#0a0a0a"></div>
<!--/FILM-->
</body></html>
